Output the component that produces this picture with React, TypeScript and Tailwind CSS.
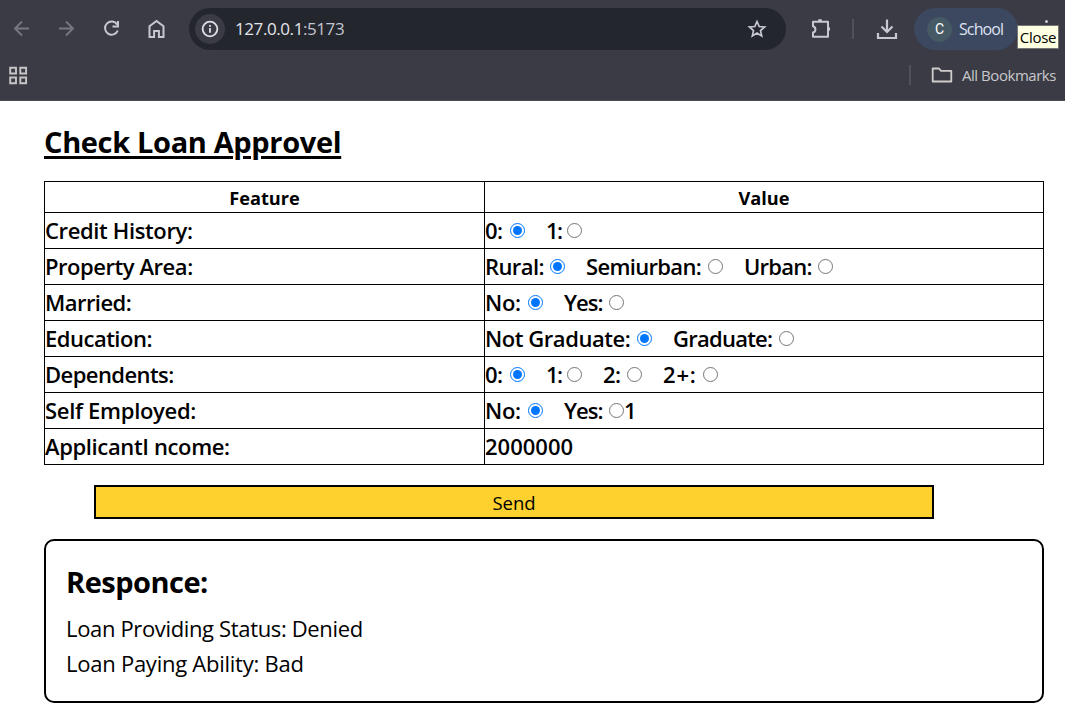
import type { ReactNode } from "react";

type Option = { label: string; labelClass: string; checked?: boolean };
type Row = { feature: string; featureClass: string; options?: Option[]; text?: string };

const rows: Row[] = [
  {
    feature: "Credit History:",
    featureClass: "tracking-[-0.37px]",
    options: [
      { label: "0:", labelClass: "w-[25px] tracking-[-0.6px]", checked: true },
      { label: "1:", labelClass: "w-[21px] tracking-[-1.5px]" },
    ],
  },
  {
    feature: "Property Area:",
    featureClass: "tracking-[-0.45px]",
    options: [
      { label: "Rural:", labelClass: "w-[65px] tracking-[-0.6px]", checked: true },
      { label: "Semiurban:", labelClass: "w-[122px] tracking-[-0.68px]" },
      { label: "Urban:", labelClass: "w-[74px] tracking-[-0.75px]" },
    ],
  },
  {
    feature: "Married:",
    featureClass: "tracking-[-0.55px]",
    options: [
      { label: "No:", labelClass: "w-[43px] tracking-[-0.3px]", checked: true },
      { label: "Yes:", labelClass: "w-[45px] tracking-[-1px]" },
    ],
  },
  {
    feature: "Education:",
    featureClass: "tracking-[-0.5px]",
    options: [
      { label: "Not Graduate:", labelClass: "w-[152px] tracking-[-0.45px]", checked: true },
      { label: "Graduate:", labelClass: "w-[106px] tracking-[-0.75px]" },
    ],
  },
  {
    feature: "Dependents:",
    featureClass: "tracking-[-0.57px]",
    options: [
      { label: "0:", labelClass: "w-[25px] tracking-[-0.6px]", checked: true },
      { label: "1:", labelClass: "w-[21px] tracking-[-1.5px]" },
      { label: "2:", labelClass: "w-[24px] tracking-[-0.5px]" },
      { label: "2+:", labelClass: "w-[40px] tracking-[0.8px]" },
    ],
  },
  {
    feature: "Self Employed:",
    featureClass: "tracking-[-0.3px]",
    options: [
      { label: "No:", labelClass: "w-[43px] tracking-[-0.3px]", checked: true },
      { label: "Yes:", labelClass: "w-[45px] tracking-[-1px]" },
    ],
    text: "1",
  },
  { feature: "ApplicantI ncome:", featureClass: "tracking-[-0.37px]", text: "2000000" },
];

function Icon({ children, className = "" }: { children: ReactNode; className?: string }) {
  return (
    <svg viewBox="0 0 24 24" fill="none" stroke="currentColor" strokeWidth="2" className={`size-6 shrink-0 ${className}`}>
      {children}
    </svg>
  );
}

function Radio({ checked }: { checked?: boolean }) {
  return checked ? (
    <span className="flex size-[15px] shrink-0 items-center justify-center rounded-full border-[1.5px] border-[#0075ff] bg-white">
      <span className="size-[9px] rounded-full bg-[#0075ff]" />
    </span>
  ) : (
    <span className="size-[15px] shrink-0 rounded-full border border-[#767676] bg-white" />
  );
}

function BrowserBar() {
  return (
    <header className="h-[101px] border-b border-[#4b4c53] bg-[#3a3b44] text-[#c7c8d0]">
      <div className="flex h-[58px] items-center pl-[10px]">
        <div className="flex gap-[21px]">
          <Icon className="text-[#777880]">
            <path d="M19 11.5H5.5M12 4.5l-7 7 7 7" strokeWidth="1.8" />
          </Icon>
          <Icon className="text-[#777880]">
            <path d="M4 11.5h13.500M11 4.500l7 7-7 7" strokeWidth="1.8" />
          </Icon>
          <Icon>
            <path d="M17.200 7.500A6.600 6.600 0 1 0 17.800 13.500M18 4v5.500h-5.500" />
          </Icon>
          <Icon>
            <path d="M4.500 20V9.300L11.500 4l7 5.300V20h-4.600v-6H9.100v6z" />
          </Icon>
        </div>
        <div className="ml-5 flex h-[42px] w-[597px] items-center rounded-full bg-[#24262e] pr-[17px] pl-[6px]">
          <span className="flex size-[30px] items-center justify-center rounded-full bg-[#3a3b44] text-[#dedfe4]">
            <Icon className="size-[22px]">
              <circle cx="12" cy="12" r="8" />
              <path d="M12 11v5M12 7.500v2" />
            </Icon>
          </span>
          <span className="ml-[10px] flex-1 text-[17px] tracking-[-0.42px] text-[#e3e4e9]">
            127.0.0.1<span className="text-[#c3c5ce]">:5173</span>
          </span>
          <Icon>
            <path d="M12 4.500l2.200 5 5.400.5-4.100 3.600 1.200 5.300-4.700-2.800-4.700 2.800 1.200-5.300L4.400 10l5.400-.5z" strokeWidth="1.700" />
          </Icon>
        </div>
        <Icon className="ml-[22px]">
          <path d="M5 4.700h15v15H5v-4.200a3.200 3.200 0 0 0 0-6.200z" strokeLinejoin="round" />
          <path d="M9.800 4.200a2.200 2.200 0 0 1 4.400 0zM20 9.800a2.200 2.200 0 0 1 0 4.400z" fill="currentColor" stroke="none" />
        </Icon>
        <span className="ml-[20px] h-5 w-[2px] bg-[#50525b]" />
        <Icon className="ml-[21px]">
          <path d="M12 2.500v12M6.500 9.500l5.500 5.500 5.500-5.500M3 16v5h18v-5" strokeWidth="2.200" />
        </Icon>
        <div className="ml-[15px] flex h-[42px] w-[104px] items-center rounded-full bg-[#3c4760] pl-[13px]">
          <span className="flex size-[25px] items-center justify-center rounded-full bg-[#455a64] font-['Roboto',sans-serif] text-[14px] text-white">C</span>
          <span className="ml-[7px] text-[16px] tracking-[-0.9px] text-[#dce1f0]">School</span>
        </div>
        <span className="mb-[16px] ml-[27px] size-[3px] rounded-full bg-[#c7c8d0]" />
      </div>
      <div className="flex h-[34px] items-center pr-[9px] pl-[6px]">
        <Icon className="text-[#c7c5c5]">
          <path d="M4.200 4.700h5.800v5.800H4.200zM14.300 4.700h5.800v5.800h-5.800zM4.200 14.500h5.800v5.800H4.200zM14.300 14.500h5.800v5.800h-5.800z" strokeWidth="1.900" />
        </Icon>
        <span className="ml-auto h-5 w-[2px] bg-[#50525b]" />
        <Icon className="ml-[19px] text-[#d0cdcd]">
          <path d="M2.700 5.500h6.300l2 2.300h10.300v10.700H2.700z" strokeWidth="1.800" strokeLinejoin="round" />
        </Icon>
        <span className="ml-[8px] w-[94px] text-[15px] tracking-[-0.46px] whitespace-nowrap text-[#c8c8cb]">All Bookmarks</span>
      </div>
    </header>
  );
}

export default function App() {
  return (
    <div className="relative h-[719px] w-[1065px] overflow-hidden bg-white font-['Open_Sans','Noto_Sans',sans-serif] text-black">
      <BrowserBar />
      <div className="absolute top-[25px] left-[1017px] flex h-6 w-[42px] items-center justify-center border border-[#767676] bg-[#ffffe1] text-[15px] tracking-[-0.3px]">
        Close
      </div>
      <main className="px-[44px] pt-[19px]">
        <h1 className="h-[44px] text-[29px] leading-[44px] font-bold tracking-[-0.35px] whitespace-nowrap underline decoration-[3px] underline-offset-[3px]">
          Check Loan Approvel
        </h1>
        <div className="mt-[17px] w-[1000px] border border-black">
          <div className="grid h-[30px] grid-cols-[439px_1fr] text-center text-[18.200px] leading-[32px] font-bold">
            <div>Feature</div>
            <div className="border-l border-black">Value</div>
          </div>
          {rows.map((row) => (
            <div key={row.feature} className="grid h-[36px] grid-cols-[439px_1fr] border-t border-black text-[22px] leading-[35px] font-semibold">
              <div className="whitespace-nowrap">
                <span className={row.featureClass}>{row.feature}</span>
              </div>
              <div className="flex items-center border-l border-black">
                {row.options && (
                  <div className="flex gap-[21px]">
                    {row.options.map((option) => (
                      <label key={option.label} className="flex items-center">
                        <span className={`shrink-0 whitespace-nowrap ${option.labelClass}`}>{option.label}</span>
                        <Radio checked={option.checked} />
                      </label>
                    ))}
                  </div>
                )}
                {row.text}
              </div>
            </div>
          ))}
        </div>
        <button className="mt-[20px] ml-[50px] block h-[34px] w-[840px] border-2 border-black bg-[#ffd12e] text-[18.500px] leading-[31px]">Send</button>
        <section className="mt-[20px] h-[164px] w-[1000px] rounded-[10px] border-2 border-black px-5 pt-[19px]">
          <h2 className="text-[29px] leading-[44px] font-bold tracking-[-0.5px]">Responce:</h2>
          <p className="mt-[7px] text-[22px] leading-[35px] tracking-[-0.35px]">Loan Providing Status: Denied</p>
          <p className="text-[22px] leading-[35px] tracking-[-0.25px]">Loan Paying Ability: Bad</p>
        </section>
      </main>
    </div>
  );
}
